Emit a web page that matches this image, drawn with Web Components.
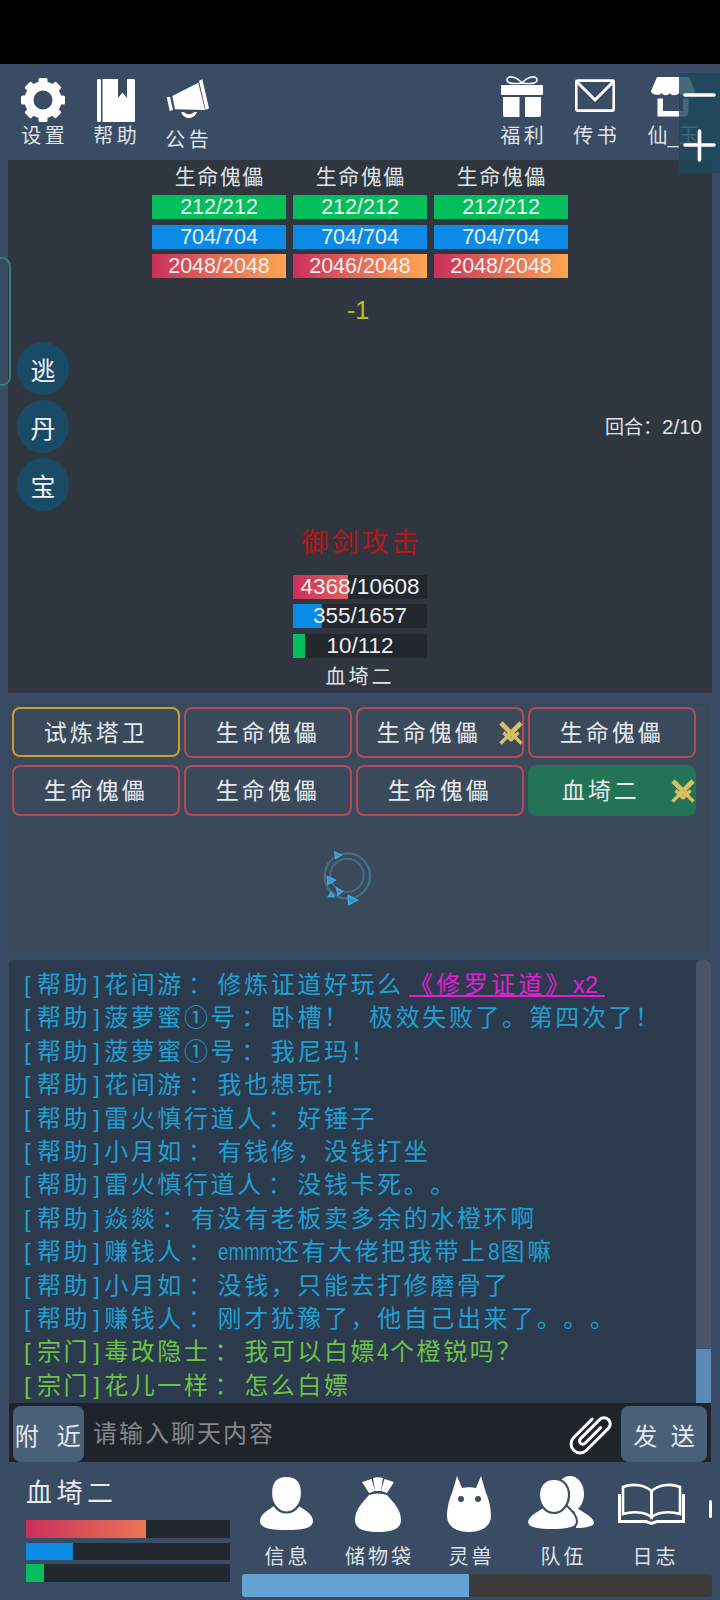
<!DOCTYPE html>
<html lang="zh">
<head>
<meta charset="utf-8">
<title>game</title>
<style>
  html, body { margin: 0; padding: 0; }
  body {
    width: 720px; height: 1600px; overflow: hidden;
    background: #3a4c63; color: #e8ecef;
    font-family: "Liberation Sans", "Noto Sans CJK SC", sans-serif;
  }
  .lat { letter-spacing: 0; }
  .digit { display: inline-block; letter-spacing: 0; transform: scaleX(.87); transform-origin: 0 50%; margin-right: -.5px; }
  .em { display: inline-block; letter-spacing: 0; transform: scaleX(.78); transform-origin: 0 50%; margin-right: -16px; }
</style>
</head>
<body>
<top-bar>
  <tool-item slot="left" label="设置">
    <svg width="60" height="48" viewBox="0 0 60 48" fill="#fff">
      <g transform="translate(30 26)">
        <circle r="14" fill="none" stroke="#fff" stroke-width="9"/>
        <rect x="-4.5" y="-22" width="9" height="9" rx="1.5"/>
        <rect x="-4.5" y="-22" width="9" height="9" rx="1.5" transform="rotate(45)"/>
        <rect x="-4.5" y="-22" width="9" height="9" rx="1.5" transform="rotate(90)"/>
        <rect x="-4.5" y="-22" width="9" height="9" rx="1.5" transform="rotate(135)"/>
        <rect x="-4.5" y="-22" width="9" height="9" rx="1.5" transform="rotate(180)"/>
        <rect x="-4.5" y="-22" width="9" height="9" rx="1.5" transform="rotate(225)"/>
        <rect x="-4.5" y="-22" width="9" height="9" rx="1.5" transform="rotate(270)"/>
        <rect x="-4.5" y="-22" width="9" height="9" rx="1.5" transform="rotate(315)"/>
      </g>
    </svg>
  </tool-item>
  <tool-item slot="left" label="帮助">
    <svg width="60" height="48" viewBox="0 0 60 48" fill="#fff">
      <rect x="12" y="5" width="4" height="43" rx="1"/>
      <path d="M17.5 5H33V24L37.5 18.5L42 24V5H49Q50 5 50 6V47Q50 48 49 48H17.5Z"/>
    </svg>
  </tool-item>
  <tool-item slot="left" label="公告" low>
    <svg width="60" height="48" viewBox="0 0 60 48" fill="#fff">
      <path d="M9.7 23.3L13 22.7L16 36L12.7 37Z"/>
      <path d="M15.3 22L41.3 8.7L48 36L18 35.3Z"/>
      <path d="M42 6.7L45.3 5.3L52 34.3L48.7 36Z"/>
      <path d="M24 38C27 46 37 46 40 38H37C34 41 30 41 27 38Z"/>
    </svg>
  </tool-item>
  <tool-item slot="right" label="福利">
    <svg width="60" height="48" viewBox="0 0 60 48" fill="#fff">
      <path d="M30 9C24 2 15 1 15 6C15 10 24 10 30 9C36 10 45 10 45 6C45 1 36 2 30 9Z" fill="none" stroke="#fff" stroke-width="1.6"/>
      <rect x="9" y="11" width="42" height="10" rx="1"/>
      <path d="M11 23H27.5V43H13Q11 43 11 41Z"/>
      <path d="M33 23H49V41Q49 43 47 43H33Z"/>
    </svg>
  </tool-item>
  <tool-item slot="right" label="传书">
    <svg width="60" height="48" viewBox="0 0 60 48" fill="none" stroke="#fff" stroke-width="2.6">
      <rect x="11.3" y="6.6" width="37.4" height="30" rx="1"/>
      <path d="M12 8L30 26L48 8" stroke-width="3"/>
    </svg>
  </tool-item>
  <tool-item slot="right" class="shop" label="仙_玉">
    <svg width="60" height="48" viewBox="0 0 60 48" fill="#fff">
      <path d="M14 3H46L52 17C52 22 45 22 44 19C42 22 37 22 36 19C34 22 28 22 27 19C25 22 20 22 19 19C17 22 8 21 8 17Z"/>
      <path d="M14.5 24.5H20V37H40V24.5H45.5V37Q45.5 42.5 40 42.5H14.5Z"/>
    </svg>
  </tool-item>
</top-bar>

<zoom-pad></zoom-pad>
<side-tab></side-tab>

<battle-panel>
  <unit-card slot="enemies" name="生命傀儡" hp="212/212" mp="704/704" rage="2048/2048"></unit-card>
  <unit-card slot="enemies" name="生命傀儡" hp="212/212" mp="704/704" rage="2046/2048"></unit-card>
  <unit-card slot="enemies" name="生命傀儡" hp="212/212" mp="704/704" rage="2048/2048"></unit-card>
  <round-btn slot="actions">逃</round-btn>
  <round-btn slot="actions">丹</round-btn>
  <round-btn slot="actions">宝</round-btn>
  <stat-bar slot="hero" kind="rage" pct="41">4368/10608</stat-bar>
  <stat-bar slot="hero" kind="mp" pct="21.5">355/1657</stat-bar>
  <stat-bar slot="hero" kind="hp" pct="9">10/112</stat-bar>
</battle-panel>

<target-panel>
  <target-btn tone="gold">试炼塔卫</target-btn>
  <target-btn>生命傀儡</target-btn>
  <target-btn sword>生命傀儡</target-btn>
  <target-btn>生命傀儡</target-btn>
  <target-btn>生命傀儡</target-btn>
  <target-btn>生命傀儡</target-btn>
  <target-btn>生命傀儡</target-btn>
  <target-btn tone="active" sword>血埼二</target-btn>
</target-panel>

<chat-panel>
  <chat-line channel="帮助" who="花间游">修炼证道好玩么 <item-link>《修罗证道》<span class="lat">x2&nbsp;</span></item-link></chat-line>
  <chat-line channel="帮助" who="菠萝蜜①号">卧槽！&nbsp; 极效失败了。第四次了！</chat-line>
  <chat-line channel="帮助" who="菠萝蜜①号">我尼玛！</chat-line>
  <chat-line channel="帮助" who="花间游">我也想玩！</chat-line>
  <chat-line channel="帮助" who="雷火慎行道人">好锤子</chat-line>
  <chat-line channel="帮助" who="小月如">有钱修，没钱打坐</chat-line>
  <chat-line channel="帮助" who="雷火慎行道人">没钱卡死。。</chat-line>
  <chat-line channel="帮助" who="焱燚">有没有老板卖多余的水橙环啊</chat-line>
  <chat-line channel="帮助" who="赚钱人"><span class="em">emmm</span>还有大佬把我带上<span class="digit">8</span>图嘛</chat-line>
  <chat-line channel="帮助" who="小月如">没钱，只能去打修磨骨了</chat-line>
  <chat-line channel="帮助" who="赚钱人">刚才犹豫了，他自己出来了。。。</chat-line>
  <chat-line channel="宗门" who="毒改隐士">我可以白嫖<span class="digit">4</span>个橙锐吗？</chat-line>
  <chat-line channel="宗门" who="花儿一样">怎么白嫖</chat-line>
</chat-panel>

<chat-input></chat-input>

<player-bar>
  <menu-item label="信息">
    <svg width="92" height="60" viewBox="0 0 92 60" fill="#fff">
      <path d="M20 47C20 39 31 35 38 29H55C62 35 73 39 73 47C73 55 60 56 46.5 56C33 56 20 55 20 47Z"/>
      <path d="M46.5 2C57 2 62 9 62 19C62 29 56 38.5 46.5 38.5C37 38.5 31 29 31 19C31 9 36 2 46.5 2Z" stroke="#3a4c63" stroke-width="2.2"/>
    </svg>
  </menu-item>
  <menu-item label="储物袋">
    <svg width="92" height="60" viewBox="0 0 92 60" fill="#fff">
      <path d="M30 8L39.5 5L43 17L37 19Z"/>
      <path d="M41 4Q46 2.5 51 4L49 17H43Z"/>
      <path d="M62 8L52.5 5L49 17L55 19Z"/>
      <path d="M37 21Q46 18 55 21C62 29 69 36 69 46C69 55 60 58 46 58C32 58 23 55 23 46C23 36 30 29 37 21Z"/>
    </svg>
  </menu-item>
  <menu-item label="灵兽">
    <svg width="92" height="60" viewBox="0 0 92 60" fill="#fff">
      <path d="M33 2L38 14C42 13 48 13 52 14L57 2L62 19C66 28 67 37 67 42C67 52 58 58 45 58C32 58 23 52 23 42C23 37 24 28 28 19Z"/>
      <circle cx="37" cy="25" r="3" fill="#3a4c63"/>
      <circle cx="54" cy="25" r="3" fill="#3a4c63"/>
    </svg>
  </menu-item>
  <menu-item label="队伍">
    <svg width="92" height="60" viewBox="0 0 92 60" fill="#fff">
      <ellipse cx="54" cy="20" rx="14" ry="18"/>
      <path d="M58 32C66 38 78 43 78 49C78 52 70 54 60 54Z"/>
      <path d="M11 48C11 41 22 37 30 31H50C56 37 61 41 61 48C61 55 48 56 36 56C24 56 11 55 11 48Z" stroke="#3a4c63" stroke-width="2"/>
      <path d="M38 5C48 5 53 12 53 21C53 30 47 39 38 39C29 39 23 30 23 21C23 12 28 5 38 5Z" stroke="#3a4c63" stroke-width="2.2"/>
    </svg>
  </menu-item>
  <menu-item label="日志">
    <svg width="92" height="60" viewBox="0 0 92 60" fill="none" stroke="#fff" stroke-width="2.6">
      <path d="M15 13C25 9 37 11 43.5 17V43C37 38 25 37 15 40Z"/>
      <path d="M72 13C62 9 50 11 43.5 17V43C50 38 62 37 72 40Z"/>
      <path d="M11.5 20V47.5H38L43.5 49.5L49 47.5H75.5V20" stroke-width="3"/>
    </svg>
  </menu-item>
  <menu-item>
    <svg width="92" height="60" viewBox="0 0 92 60" fill="#fff"><rect x="9" y="26" width="3" height="18" rx="1.5"/></svg>
  </menu-item>
</player-bar>

<script>
// crossed swords, drawn once and mirrored
const SWORD_HALF = `<path d="M2 2L16.5 16.5" stroke-width="4.6"/><path d="M11.5 19.5L19.5 11.5" stroke-width="3.2"/><path d="M15 15L22.5 22.5" stroke-width="3.4"/>`;
const SWORDS = `
  <svg width="24" height="24" viewBox="0 0 24 24" fill="none" stroke="#d8c062">
    <g>${SWORD_HALF}</g>
    <g transform="matrix(-1 0 0 1 24 0)">${SWORD_HALF}</g>
  </svg>`;

class BaseEl extends HTMLElement {
    constructor(){
        super();
        this.attachShadow({mode: "open"});
    }
    connectedCallback(){
        const template = document.createElement("template");
        template.innerHTML = `<style>${this.getStyles()}</style>${this.getMarkup()}`;
        this.shadowRoot.appendChild(template.content.cloneNode(true));
    }
    getStyles(){ return ""; }
    getMarkup(){ return "<slot></slot>"; }
}

class TopBar extends BaseEl {
    getStyles(){
        return `
        :host{display:block;background:#000;padding-top:64px}
        .bar{display:flex;height:86px;padding:10px 17px 0 13px;background:#3a4c63}
        .group{display:flex;gap:12px}
        .right{margin-left:auto;gap:13px}`;
    }
    getMarkup(){
        return `<div class="bar">
            <div class="group"><slot name="left"></slot></div>
            <div class="group right"><slot name="right"></slot></div>
        </div>`;
    }
}

class ToolItem extends BaseEl {
    getStyles(){
        return `
        :host{display:block;width:60px}
        :host(.shop){margin-left:5px}
        .icon{height:48px}
        svg,::slotted(svg){display:block}
        .label{font-size:20px;line-height:26px;height:26px;letter-spacing:3.5px;text-indent:3.5px;
               text-align:center;white-space:nowrap;color:#dfe3e7;margin-top:1px}
        :host([low]) .label{margin-top:5px}
        :host(.shop) .label{letter-spacing:0;text-indent:0}`;
    }
    getMarkup(){
        return `<div class="icon"><slot></slot></div><div class="label">${this.getAttribute("label")}</div>`;
    }
}

class ZoomPad extends BaseEl {
    getStyles(){
        return `:host{position:absolute;left:679px;top:73px;width:41px;height:100px;
                background:rgba(28,72,92,.82)}
                svg{display:block}`;
    }
    getMarkup(){
        return `<svg width="41" height="100" viewBox="0 0 41 100" stroke="#fff" stroke-width="3.6" stroke-linecap="round">
            <path d="M6 22H35"/><path d="M6 72H35M20.5 58V87"/>
        </svg>`;
    }
}

class SideTab extends BaseEl {
    getStyles(){
        return `:host{position:absolute;left:-12px;top:257px;width:19px;height:125px;z-index:2;
                border:2px solid #3a7f80;border-radius:0 9px 9px 0}`;
    }
}

class BattlePanel extends BaseEl {
    getStyles(){
        return `
        :host{display:block;margin:0 8px;height:533px;background:#30363f;overflow:hidden}
        .enemies{display:flex;justify-content:center;gap:7px;padding-top:2px}
        .damage{text-align:center;color:#b9c01c;font-size:25px;line-height:30px;margin-top:17px;padding-right:4px}
        .mid{display:flex;justify-content:space-between;align-items:center;padding:0 10px 0 9px;margin-top:17px}
        .actions{display:flex;flex-direction:column;gap:5px}
        .round{font-size:19px;color:#dfe3e7;white-space:nowrap;margin-top:-2px}
        .round b{font-weight:400;font-size:20.5px}
        .skill{text-align:center;color:#b81414;font-size:27px;letter-spacing:3px;text-indent:3px;line-height:40px;margin-top:12px;margin-bottom:-1px}
        .hero{display:flex;flex-direction:column;gap:5.5px;width:134px;margin:12.5px auto 0}
        .name{text-align:center;font-size:20px;letter-spacing:3px;line-height:30px;margin-top:4px;color:#dfe3e7}`;
    }
    getMarkup(){
        return `
        <div class="enemies"><slot name="enemies"></slot></div>
        <div class="damage">-1</div>
        <div class="mid">
            <div class="actions"><slot name="actions"></slot></div>
            <div class="round">回合：<b>2/10</b></div>
        </div>
        <div class="skill">御剑攻击</div>
        <div class="hero"><slot name="hero"></slot></div>
        <div class="name">血埼二</div>`;
    }
}

class UnitCard extends BaseEl {
    getStyles(){
        return `
        :host{display:block;width:134px}
        .name{text-align:center;font-size:21px;letter-spacing:1.5px;text-indent:1.5px;line-height:30px;height:30px;margin-bottom:3px;color:#dfe3e7}
        .bars{display:flex;flex-direction:column;gap:5.5px}`;
    }
    getMarkup(){
        return `<div class="name">${this.getAttribute("name")}</div>
        <div class="bars">
            <stat-bar kind="hp" pct="100" small>${this.getAttribute("hp")}</stat-bar>
            <stat-bar kind="mp" pct="100" small>${this.getAttribute("mp")}</stat-bar>
            <stat-bar kind="rage" pct="100" small>${this.getAttribute("rage")}</stat-bar>
        </div>`;
    }
}

class StatBar extends BaseEl {
    getStyles(){
        const pct = parseFloat(this.getAttribute("pct")) || 0;
        const kind = this.getAttribute("kind");
        let fill = "linear-gradient(#0b8ae6,#0b8ae6)";
        if (kind === "hp") fill = "linear-gradient(#02bf5b,#02bf5b)";
        if (kind === "rage") fill = `linear-gradient(90deg,#cb2f5a,#ffa652 ${100 * 100 / pct}%)`;
        return `
        :host{display:block;height:24px;line-height:24px;text-align:center;color:#eef1f3;
              font-size:22.5px;white-space:nowrap;
              background:${fill} no-repeat 0 0 / ${pct}% 100%, #23272e}
        :host([small]){font-size:21.5px}`;
    }
}

class RoundBtn extends BaseEl {
    getStyles(){
        return `:host{display:flex;align-items:center;justify-content:center;width:52px;height:53px;
                border-radius:50%;background:#194a66;color:#f0f3f5;font-size:25px}`;
    }
}

class TargetPanel extends BaseEl {
    getStyles(){
        return `
        :host{display:block;margin:11px 11px 0 9px;height:247px;box-sizing:border-box;padding:3px 0 0 3px;
              background:#3a4a5b;box-shadow:inset 0 0 0 1px #374656}
        .grid{display:grid;grid-template-columns:repeat(4,167.5px);column-gap:4.5px;row-gap:7px}
        .loader{margin:16px 0 0 288px}
        svg{display:block}`;
    }
    getMarkup(){
        return `<div class="grid"><slot></slot></div>
        <svg class="loader" width="100" height="90" viewBox="0 0 300 270" fill="#3aa6e6" fill-opacity=".7" stroke="#3cb0ee" stroke-width="4">
            <circle cx="142" cy="132" r="68" fill="none" stroke="#4b7c99" stroke-opacity=".7" stroke-width="7"/>
            <circle cx="141" cy="130" r="50" fill="none" stroke="#4b7c99" stroke-opacity=".7" stroke-width="6"/>
            <path d="M104 60L124 69L107 79Z"/>
            <path d="M82 133L106 144L84 157Z"/>
            <path d="M110 168L128 178L114 190Z"/>
            <path d="M93 180L102 194H85Z"/>
            <path d="M144 190L172 204L146 218Z"/>
        </svg>`;
    }
}

class TargetBtn extends BaseEl {
    getStyles(){
        return `
        :host{display:block;position:relative;box-sizing:border-box;height:51px;border:2px solid #b5495a;border-radius:8px;
              font-size:23px;letter-spacing:3px;color:#e6e9ec}
        :host([tone="gold"]){border-color:#c9a02f;height:50px}
        :host([tone="active"]){background:#237355;border-color:#237355}
        .text{display:flex;align-items:center;justify-content:center;box-sizing:border-box;height:100%;padding-bottom:3px;white-space:nowrap}
        :host([sword]) .text{padding-right:22px}
        .sword{position:absolute;right:-1px;top:12px}
        svg{display:block}`;
    }
    getMarkup(){
        const sword = this.hasAttribute("sword") ? `<div class="sword">${SWORDS}</div>` : "";
        return `<div class="text"><slot></slot></div>${sword}`;
    }
}

class ChatPanel extends BaseEl {
    getStyles(){
        return `
        :host{display:flex;margin:9px 9px 0;height:443px;background:#2b3a4d;border-radius:4px 4px 0 0;overflow:hidden}
        .log{flex:1;min-width:0;box-sizing:border-box;padding:8px 0 0 15px;overflow:hidden}
        .track{width:15px;display:flex;flex-direction:column;background:#485667;border-radius:5px 5px 0 0}
        .thumb{margin-top:auto;height:54px;background:#5c89b5}`;
    }
    getMarkup(){
        return `<div class="log"><slot></slot></div><div class="track"><div class="thumb"></div></div>`;
    }
}

class ChatLine extends BaseEl {
    getStyles(){
        return `
        :host{display:block;font-size:24px;letter-spacing:2.6px;line-height:33.4px;height:33.4px;white-space:nowrap;color:#1f9fd2;
              text-spacing-trim:space-all}
        :host([channel="宗门"]){color:#6cc446}
        .open{margin-right:3.7px}
        .close{margin:0 1.7px 0 3px}
        .colon{margin:0 3px 0 4px}
        .num{font-family:"Noto Sans CJK SC",sans-serif;line-height:0}`;
    }
    getMarkup(){
        const who = this.getAttribute("who").replace("①", '<span class="num">①</span>');
        return `<span class="open">[</span>${this.getAttribute("channel")}<span class="close">]</span>${who}<span class="colon">：</span><slot></slot>`;
    }
}

class ItemLink extends BaseEl {
    getStyles(){
        return `:host{color:#e01fd6;text-decoration:underline;letter-spacing:3.3px;margin-left:-4px}`;
    }
}

class ChatInput extends BaseEl {
    getStyles(){
        return `
        :host{display:flex;align-items:center;margin:0 9px;height:59px;background:#1f242b;box-sizing:border-box;padding:3px 4px 0}
        .btn{flex:none;display:flex;align-items:center;justify-content:center;height:56px;background:#4a6078;border-radius:8px;
             font-size:24px;color:#e6e9ec;white-space:pre}
        .near{width:71px;letter-spacing:1.5px}
        .send{width:86px}
        .hint{flex:1;padding:0 0 5px 9px;font-size:24px;letter-spacing:2px;color:#85888c;white-space:nowrap}
        svg{display:block;margin-right:9px;overflow:visible}`;
    }
    getMarkup(){
        return `<div class="btn near">附  近</div>
        <div class="hint">请输入聊天内容</div>
        <svg width="44" height="40" viewBox="0 0 44 40" fill="none" stroke="#fff" stroke-width="3" stroke-linecap="round">
            <path transform="rotate(45 22 20)" d="M25 8V30A3.2 3.2 0 0 1 18.6 30V3A6.2 6.2 0 0 1 31 3V34A9 9 0 0 1 13 34V8"/>
        </svg>
        <div class="btn send">发  送</div>`;
    }
}

class PlayerBar extends BaseEl {
    getStyles(){
        return `
        :host{display:flex;height:138px;overflow:hidden}
        .me{flex:none;width:204px;margin:13px 10px 0 26px}
        .name{font-size:26px;letter-spacing:4.5px;line-height:36px;margin-bottom:9px;color:#e6e9ec}
        stat-bar{height:18px;line-height:18px}
        .b2{height:17px;line-height:17px;margin:5px 0 4px}
        .side{flex:none;width:472px;padding-top:12px;box-sizing:border-box}
        .menu{display:flex;overflow:hidden;height:100px}
        .progress{margin-left:2px;height:23px;border-radius:3px;background:linear-gradient(#64a3d4,#64a3d4) no-repeat 0 0 / 227px 100%,#3b3b3b}`;
    }
    getMarkup(){
        return `<div class="me">
            <div class="name">血埼二</div>
            <stat-bar kind="rage" pct="59"></stat-bar>
            <stat-bar class="b2" kind="mp" pct="23"></stat-bar>
            <stat-bar kind="hp" pct="9"></stat-bar>
        </div>
        <div class="side">
            <div class="menu"><slot></slot></div>
            <div class="progress"></div>
        </div>`;
    }
}

class MenuItem extends BaseEl {
    getStyles(){
        return `
        :host{flex:none;display:block;width:92px}
        svg,::slotted(svg){display:block}
        .icon{height:60px}
        .label{margin-top:10px;text-align:center;font-size:20px;letter-spacing:3px;text-indent:3px;line-height:26px;color:#dfe3e7;white-space:nowrap}`;
    }
    getMarkup(){
        const label = this.getAttribute("label");
        return `<div class="icon"><slot></slot></div>${label ? `<div class="label">${label}</div>` : ""}`;
    }
}

customElements.define("top-bar", TopBar);
customElements.define("tool-item", ToolItem);
customElements.define("zoom-pad", ZoomPad);
customElements.define("side-tab", SideTab);
customElements.define("battle-panel", BattlePanel);
customElements.define("unit-card", UnitCard);
customElements.define("stat-bar", StatBar);
customElements.define("round-btn", RoundBtn);
customElements.define("target-panel", TargetPanel);
customElements.define("target-btn", TargetBtn);
customElements.define("chat-panel", ChatPanel);
customElements.define("chat-line", ChatLine);
customElements.define("item-link", ItemLink);
customElements.define("chat-input", ChatInput);
customElements.define("player-bar", PlayerBar);
customElements.define("menu-item", MenuItem);
</script>
</body>
</html>
